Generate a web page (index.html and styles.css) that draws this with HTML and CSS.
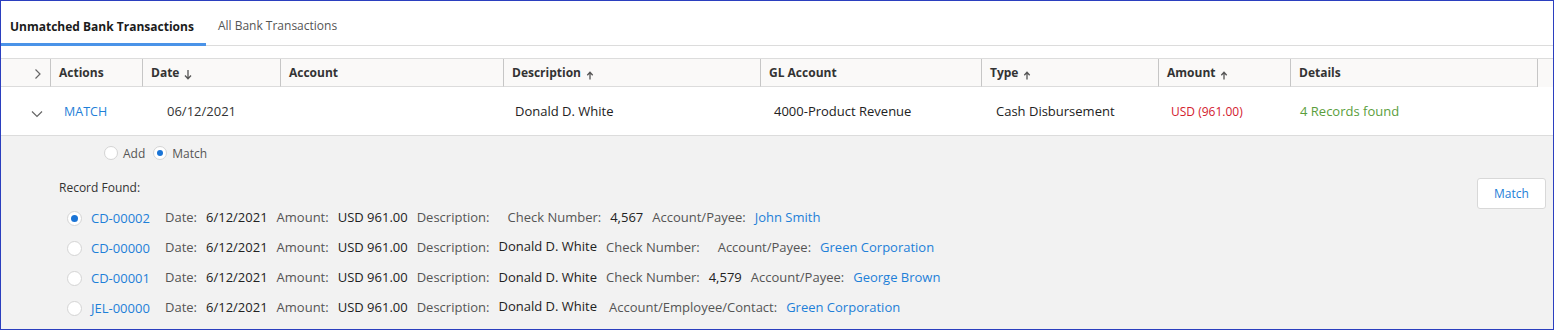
FILE: index.html
```html
<!DOCTYPE html>
<html>
<head>
<meta charset="utf-8">
<link rel="stylesheet" href="styles.css">
</head>
<body>
<div class="frame">
  <div class="tabs">
    <div class="tab tab-active">Unmatched Bank Transactions</div>
    <div class="tab">All Bank Transactions</div>
  </div>

  <div class="grid head">
    <div class="cell c-exp"><svg class="chev" width="8" height="12" viewBox="0 0 8 12"><path d="M1.5 1.5 L6 6 L1.5 10.5" fill="none" stroke="#666" stroke-width="1.2"/></svg></div>
    <div class="cell sep hcell">Actions</div>
    <div class="cell sep hcell">Date <svg class="sort" width="8" height="11" viewBox="0 0 8 11"><path d="M4 1 V9.5 M1 6.5 L4 9.7 L7 6.5" fill="none" stroke="#555" stroke-width="1.3"/></svg></div>
    <div class="cell sep hcell">Account</div>
    <div class="cell sep hcell">Description <svg class="sort up" width="8" height="9" viewBox="0 0 8 9"><path d="M4 8.5 V1.5 M1.3 4.2 L4 1.3 L6.7 4.2" fill="none" stroke="#555" stroke-width="1.3"/></svg></div>
    <div class="cell sep hcell">GL Account</div>
    <div class="cell sep hcell">Type <svg class="sort up" width="8" height="9" viewBox="0 0 8 9"><path d="M4 8.5 V1.5 M1.3 4.2 L4 1.3 L6.7 4.2" fill="none" stroke="#555" stroke-width="1.3"/></svg></div>
    <div class="cell sep hcell">Amount <svg class="sort up" width="8" height="9" viewBox="0 0 8 9"><path d="M4 8.5 V1.5 M1.3 4.2 L4 1.3 L6.7 4.2" fill="none" stroke="#555" stroke-width="1.3"/></svg></div>
    <div class="cell sep hcell">Details</div>
    <div class="cell sep gutter"></div>
  </div>

  <div class="grid row">
    <div class="cell c-exp"><svg class="chev-down" width="12" height="8" viewBox="0 0 12 8"><path d="M1 1.5 L6 6.5 L11 1.5" fill="none" stroke="#666" stroke-width="1.2"/></svg></div>
    <div class="cell d-act link">MATCH</div>
    <div class="cell d-date">06/12/2021</div>
    <div class="cell d-acc"></div>
    <div class="cell d-desc">Donald D. White</div>
    <div class="cell d-gl">4000-Product Revenue</div>
    <div class="cell d-type">Cash Disbursement</div>
    <div class="cell d-amt neg">USD (961.00)</div>
    <div class="cell d-det found">4 Records found</div>
    <div class="cell"></div>
  </div>

  <div class="expand">
    <div class="mode">
      <label class="opt"><span class="radio"></span>Add</label>
      <label class="opt"><span class="radio on"></span>Match</label>
    </div>
    <div class="body">
      <div class="records">
        <div class="rec-title">Record Found:</div>
        <div class="rec">
          <span class="radio big on"></span>
          <span class="rec-id link">CD-00002</span>
          <span class="lbl">Date:</span><span class="val">6/12/2021</span>
          <span class="lbl">Amount:</span><span class="val">USD 961.00</span>
          <span class="lbl">Description:</span><span class="val"></span>
          <span class="lbl">Check Number:</span><span class="val">4,567</span>
          <span class="lbl">Account/Payee:</span><span class="val vlink">John Smith</span>
        </div>
        <div class="rec">
          <span class="radio big"></span>
          <span class="rec-id link">CD-00000</span>
          <span class="lbl">Date:</span><span class="val">6/12/2021</span>
          <span class="lbl">Amount:</span><span class="val">USD 961.00</span>
          <span class="lbl">Description:</span><span class="val hi">Donald D. White</span>
          <span class="lbl">Check Number:</span><span class="val"></span>
          <span class="lbl">Account/Payee:</span><span class="val vlink">Green Corporation</span>
        </div>
        <div class="rec">
          <span class="radio big"></span>
          <span class="rec-id link">CD-00001</span>
          <span class="lbl">Date:</span><span class="val">6/12/2021</span>
          <span class="lbl">Amount:</span><span class="val">USD 961.00</span>
          <span class="lbl">Description:</span><span class="val">Donald D. White</span>
          <span class="lbl">Check Number:</span><span class="val">4,579</span>
          <span class="lbl">Account/Payee:</span><span class="val vlink">George Brown</span>
        </div>
        <div class="rec">
          <span class="radio big"></span>
          <span class="rec-id link">JEL-00000</span>
          <span class="lbl">Date:</span><span class="val">6/12/2021</span>
          <span class="lbl">Amount:</span><span class="val">USD 961.00</span>
          <span class="lbl">Description:</span><span class="val hi">Donald D. White</span>
          <span class="lbl wide">Account/Employee/Contact:</span><span class="val vlink">Green Corporation</span>
        </div>
      </div>
      <button class="btn">Match</button>
    </div>
  </div>
</div>
</body>
</html>
```
FILE: styles.css
```css
* { box-sizing: border-box; }
html, body { margin: 0; padding: 0; }
body {
  font-family: "Open Sans", "Noto Sans", sans-serif;
  color: #333;
  background: #fff;
}
.frame {
  width: 1554px;
  height: 330px;
  border: 1px solid #2b3fbf;
  background: #fff;
  display: flex;
  flex-direction: column;
  overflow: hidden;
}

/* tabs */
.tabs {
  display: flex;
  height: 45px;
  border-bottom: 1px solid #dcdcdc;
  flex: none;
}
.tab {
  height: 44px;
  padding: 8px 12px 3px;
  display: flex;
  align-items: center;
  font-size: 12px;
  color: #555;
}
.tab-active {
  padding-left: 9px;
  padding-right: 12px;
  font-weight: 700;
  color: #1b1b1b;
  border-bottom: 3px solid #4a93e8;
  margin-bottom: -1px;
  height: 45px;
  padding-bottom: 0;
}

/* grid */
.grid {
  display: grid;
  grid-template-columns: 49px 92px 138px 223px 257px 221px 177px 132px 247px 1fr;
  flex: none;
}
.head {
  margin-top: 12px;
  height: 29px;
  border-top: 1px solid #dcdcdc;
  background: #faf9f8;
}
.cell {
  display: flex;
  align-items: center;
  white-space: nowrap;
  min-width: 0;
}
.head .cell { border-bottom: 1px solid #dcdcdc; }
.head .gutter { border-bottom: none; }
.sep { border-left: 1px solid #c6c6c6; }
.hcell {
  padding-left: 8px;
  font-size: 12px;
  font-weight: 700;
  color: #333;
}
.c-exp { justify-content: flex-start; padding-left: 33px; }
.chev { margin-top: 3px; }
.sort { margin-left: 5px; margin-top: 4px; }
.sort.up { margin-top: 5px; }

.row {
  height: 49px;
  border-bottom: 1px solid #dcdcdc;
  font-size: 13px;
  color: #222;
}
.row .c-exp { padding-left: 30px; padding-top: 5px; }
.d-act { padding-left: 14px; font-size: 12.5px; }
.d-date { padding-left: 25px; color: #333; }
.d-desc { padding-left: 12px; }
.d-gl { padding-left: 14px; }
.d-type { padding-left: 15px; }
.d-amt { padding-left: 13px; }
.d-det { padding-left: 10px; }
.link { color: #1e80d8; }
.neg { color: #d3202e; font-size: 12px; }
.found { color: #5a9e3c; }

/* expanded */
.expand {
  flex: 1;
  background: #f2f2f2;
  display: flex;
  flex-direction: column;
}
.mode {
  display: flex;
  align-items: center;
  gap: 8px;
  height: 20px;
  margin-top: 7px;
  padding-left: 103px;
  font-size: 12px;
  color: #555;
}
.opt { display: flex; align-items: center; gap: 5px; }
.radio {
  width: 14px;
  height: 14px;
  border-radius: 50%;
  border: 1px solid #d4d4d4;
  background: #fff;
  display: flex;
  align-items: center;
  justify-content: center;
  flex: none;
}
.radio.on::after {
  content: "";
  width: 6px;
  height: 6px;
  border-radius: 50%;
  background: #1a74d6;
}
.radio.big { width: 15px; height: 15px; margin-top: 2px; }
.radio.big.on::after { width: 7px; height: 7px; }

.body {
  display: flex;
  justify-content: space-between;
  align-items: flex-start;
  margin-top: 15px;
  padding-right: 7px;
}
.records { display: flex; flex-direction: column; }
.rec-title {
  height: 20px;
  line-height: 20px;
  padding-left: 58px;
  font-size: 12px;
  color: #333;
  margin-bottom: 4px;
}
.rec {
  display: flex;
  align-items: center;
  gap: 9px;
  height: 30px;
  padding-left: 66px;
  font-size: 13px;
}
.rec-id { width: 65px; margin-top: 2px; }
.lbl { color: #555; }
.lbl.wide { margin-left: 3px; }
.val { color: #222; }
.val.vlink { color: #1e80d8; }
.val.hi { margin-top: -3px; }
.btn {
  width: 69px;
  height: 31px;
  background: #fff;
  border: 1px solid #d8d8d8;
  border-radius: 3px;
  color: #1e80d8;
  font-family: inherit;
  font-size: 12px;
  padding: 0;
}
```
